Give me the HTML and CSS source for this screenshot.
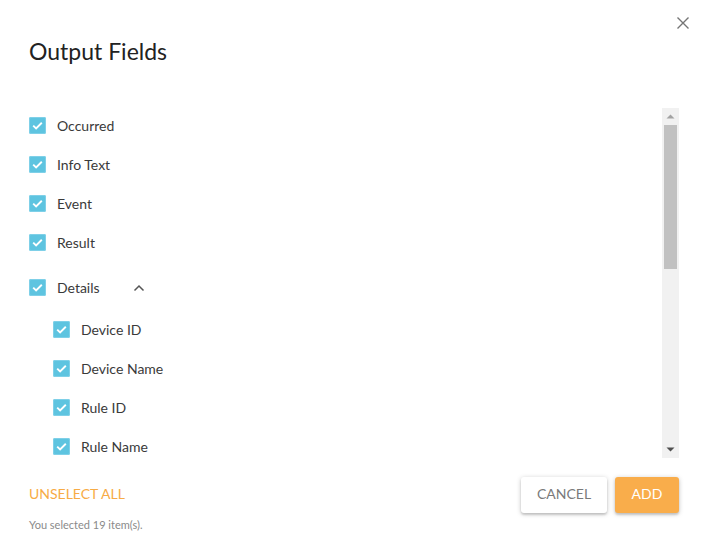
FILE: index.html
```html
<!DOCTYPE html>
<html>
<head>
<meta charset="utf-8">
<link rel="stylesheet" href="styles.css">
</head>
<body>
<div class="dialog">
  <div class="header">
    <h1 class="title">Output Fields</h1>
    <button class="close" aria-label="Close">
      <svg width="14" height="14" viewBox="0 0 14 14"><path d="M1.5 1.5L12.5 12.5M12.5 1.5L1.5 12.5" stroke="#757575" stroke-width="1.4" fill="none"/></svg>
    </button>
  </div>
  <div class="list-wrap">
    <div class="list">
      <div class="row"><span class="cb"><svg viewBox="0 0 17 17"><path d="M4.2 8.6l2.9 2.8L12.8 5.8" stroke="#fff" stroke-width="1.9" fill="none"/></svg></span><span class="label">Occurred</span></div>
      <div class="row"><span class="cb"><svg viewBox="0 0 17 17"><path d="M4.2 8.6l2.9 2.8L12.8 5.8" stroke="#fff" stroke-width="1.9" fill="none"/></svg></span><span class="label">Info Text</span></div>
      <div class="row"><span class="cb"><svg viewBox="0 0 17 17"><path d="M4.2 8.6l2.9 2.8L12.8 5.8" stroke="#fff" stroke-width="1.9" fill="none"/></svg></span><span class="label">Event</span></div>
      <div class="row"><span class="cb"><svg viewBox="0 0 17 17"><path d="M4.2 8.6l2.9 2.8L12.8 5.8" stroke="#fff" stroke-width="1.9" fill="none"/></svg></span><span class="label">Result</span></div>
      <div class="row group"><span class="cb"><svg viewBox="0 0 17 17"><path d="M4.2 8.6l2.9 2.8L12.8 5.8" stroke="#fff" stroke-width="1.9" fill="none"/></svg></span><span class="label">Details</span>
        <svg class="chev" width="12" height="8" viewBox="0 0 12 8"><path d="M1.5 6.5L6 2L10.5 6.5" stroke="#555" stroke-width="1.5" fill="none"/></svg>
      </div>
      <div class="children">
        <div class="row"><span class="cb"><svg viewBox="0 0 17 17"><path d="M4.2 8.6l2.9 2.8L12.8 5.8" stroke="#fff" stroke-width="1.9" fill="none"/></svg></span><span class="label">Device ID</span></div>
        <div class="row"><span class="cb"><svg viewBox="0 0 17 17"><path d="M4.2 8.6l2.9 2.8L12.8 5.8" stroke="#fff" stroke-width="1.9" fill="none"/></svg></span><span class="label">Device Name</span></div>
        <div class="row"><span class="cb"><svg viewBox="0 0 17 17"><path d="M4.2 8.6l2.9 2.8L12.8 5.8" stroke="#fff" stroke-width="1.9" fill="none"/></svg></span><span class="label">Rule ID</span></div>
        <div class="row"><span class="cb"><svg viewBox="0 0 17 17"><path d="M4.2 8.6l2.9 2.8L12.8 5.8" stroke="#fff" stroke-width="1.9" fill="none"/></svg></span><span class="label">Rule Name</span></div>
        <div class="row"><span class="cb"><svg viewBox="0 0 17 17"><path d="M4.2 8.6l2.9 2.8L12.8 5.8" stroke="#fff" stroke-width="1.9" fill="none"/></svg></span><span class="label">Rule Type</span></div>
      </div>
    </div>
    <div class="scrollbar">
      <svg class="arrow" width="17" height="17" viewBox="0 0 17 17"><path d="M4.5 10.5h8L8.5 6.5z" fill="#a3a3a3"/></svg>
      <div class="track"><div class="thumb"></div></div>
      <svg class="arrow" width="17" height="17" viewBox="0 0 17 17"><path d="M4.5 6.5h8L8.5 10.5z" fill="#505050"/></svg>
    </div>
  </div>
  <div class="footer">
    <div class="left">
      <a class="link" href="#">UNSELECT ALL</a>
      <div class="count">You selected 19 item(s).</div>
    </div>
    <div class="actions">
      <button class="btn cancel">CANCEL</button>
      <button class="btn add">ADD</button>
    </div>
  </div>
</div>
</body>
</html>
```
FILE: styles.css
```css
* { box-sizing: border-box; }
html, body { margin: 0; padding: 0; background: #fff; }
body { font-family: Lato, "Open Sans", sans-serif; color: #333; }
button { font-family: inherit; border: none; background: none; padding: 0; cursor: pointer; }

.dialog { width: 708px; height: 550px; padding: 0 29px; display: flex; flex-direction: column; }

.header { display: flex; justify-content: space-between; align-items: flex-start; height: 108px; flex: none; }
.title { margin: 36px 0 0; font-size: 23px; line-height: 30px; font-weight: 400; color: #222; }
.close { margin-top: 16px; margin-right: -11px; width: 14px; height: 14px; display: flex; }

.list-wrap { display: flex; height: 350px; flex: none; }
.list { flex: 1; overflow: hidden; margin-top: -2px; }
.row { display: flex; align-items: center; height: 39px; }
.row.group { margin-top: 6px; }
.children { margin-top: 3px; padding-left: 24px; }
.cb { width: 17px; height: 17px; border-radius: 2px; background: #5ec4e0; box-shadow: inset 0 0 0 1px #7fd0e8; display: flex; flex: none; }
.cb svg { width: 17px; height: 17px; }
.label { margin-left: 11px; font-size: 14px; color: #3a3a3a; }
.chev { margin-left: 33px; margin-top: 0; }

.scrollbar { width: 17px; background: #f1f1f1; display: flex; flex-direction: column; }
.arrow { flex: none; display: block; }
.track { flex: 1; padding: 0 2px; }
.thumb { height: 144px; background: #c1c1c1; }

.footer { margin-top: 19px; display: flex; justify-content: space-between; align-items: flex-start; }
.left { display: flex; flex-direction: column; align-items: flex-start; }
.link { display: block; height: 36px; line-height: 34px; font-size: 14px; color: #f7ab45; text-decoration: none; white-space: nowrap; }
.count { margin-top: 5px; font-size: 11px; line-height: 14px; color: #8a8a8a; white-space: nowrap; }
.actions { display: flex; gap: 8px; }
.btn { height: 36px; padding-bottom: 3px; border-radius: 3px; font-size: 14px; box-shadow: 0 1px 5px rgba(0,0,0,.22), 0 2px 2px rgba(0,0,0,.12); }
.cancel { width: 86px; background: #fff; color: #7a7a7a; }
.add { width: 64px; background: #f9ad4b; color: #fff; }
```
